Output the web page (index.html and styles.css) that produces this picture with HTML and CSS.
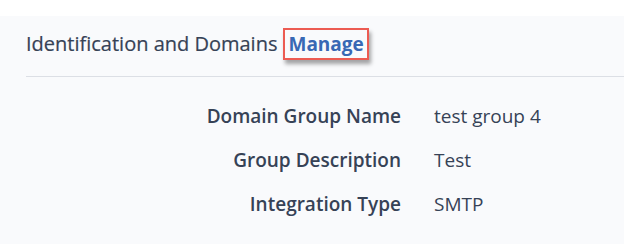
FILE: index.html
```html
<!DOCTYPE html>
<html lang="en">
<head>
  <meta charset="UTF-8">
  <title>Identification and Domains</title>
  <link rel="stylesheet" href="styles.css">
</head>
<body>
  <div class="panel">
    <div class="panel-header">
      <h2>Identification and Domains</h2>
      <a class="manage-link" href="#">Manage</a>
    </div>
    <dl class="details">
      <dt>Domain Group Name</dt>
      <dd>test group 4</dd>
      <dt>Group Description</dt>
      <dd>Test</dd>
      <dt>Integration Type</dt>
      <dd>SMTP</dd>
    </dl>
  </div>
</body>
</html>
```

FILE: styles.css
```css
body {
  margin: 0;
  padding-top: 16px;
  background: white;
  font-family: "Open Sans", sans-serif;
  color: #364256;
}
.panel {
  background: #f9fafc;
  min-height: 228px;
  padding-left: 26px;
}
.panel-header {
  display: flex;
  align-items: baseline;
  box-sizing: border-box;
  height: 61px;
  padding-top: 12px;
  border-bottom: 1px solid #dcdfe5;
}
.panel-header h2 {
  margin: 0;
  font-size: 20px;
  font-weight: 500;
  -webkit-text-stroke: 0.2px #364256;
}
.manage-link {
  margin-left: 6px;
  padding: 1px 3px;
  border: 2px solid #ec5b52;
  box-shadow: 2px 4px 4px rgba(0, 0, 0, 0.35);
  color: #3868b4;
  font-size: 19px;
  font-weight: bold;
  text-decoration: none;
}
.details {
  display: grid;
  grid-template-columns: 375px auto;
  column-gap: 33px;
  row-gap: 18px;
  margin: 0;
  padding-top: 26px;
  font-size: 19px;
}
.details dt {
  text-align: right;
  font-weight: 600;
}
.details dd {
  margin: 0;
}
```
